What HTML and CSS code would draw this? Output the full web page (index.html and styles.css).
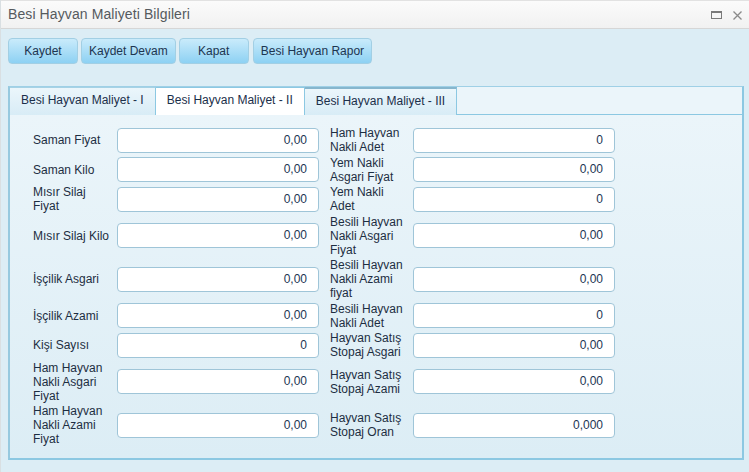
FILE: index.html
```html
<!DOCTYPE html>
<html lang="tr">
<head>
<meta charset="utf-8">
<title>Besi Hayvan Maliyeti Bilgileri</title>
<link rel="stylesheet" href="styles.css">
</head>
<body>
<div class="win">
  <div class="titlebar">
    <span class="title">Besi Hayvan Maliyeti Bilgileri</span>
    <span class="tools">
      <svg class="ico" width="11" height="8" viewBox="0 0 11 8"><rect x="0.5" y="0.5" width="10" height="7" fill="none" stroke="#7a7a7a" stroke-width="1"/><rect x="0" y="0" width="11" height="2" fill="#7a7a7a"/></svg>
      <svg class="ico" width="9" height="9" viewBox="0 0 9 9"><path d="M0.5 0.5 L8.5 8.5 M8.5 0.5 L0.5 8.5" stroke="#8a8a8a" stroke-width="1.3" fill="none"/></svg>
    </span>
  </div>
  <div class="body">
    <div class="toolbar">
      <button class="btn">Kaydet</button>
      <button class="btn">Kaydet Devam</button>
      <button class="btn">Kapat</button>
      <button class="btn">Besi Hayvan Rapor</button>
    </div>
    <div class="tabpanel">
      <div class="tabs">
        <div class="tab">Besi Hayvan Maliyet - I</div>
        <div class="tab active">Besi Hayvan Maliyet - II</div>
        <div class="tab hover">Besi Hayvan Maliyet - III</div>
      </div>
      <div class="content">
        <div class="form">
          <div class="lbl">Saman Fiyat</div><div class="inp">0,00</div>
          <div class="lbl r">Ham Hayvan Nakli Adet</div><div class="inp">0</div>

          <div class="lbl">Saman Kilo</div><div class="inp">0,00</div>
          <div class="lbl r">Yem Nakli Asgari Fiyat</div><div class="inp">0,00</div>

          <div class="lbl">Mısır Silaj Fiyat</div><div class="inp">0,00</div>
          <div class="lbl r">Yem Nakli Adet</div><div class="inp">0</div>

          <div class="lbl">Mısır Silaj Kilo</div><div class="inp">0,00</div>
          <div class="lbl r">Besili Hayvan Nakli Asgari Fiyat</div><div class="inp">0,00</div>

          <div class="lbl">İşçilik Asgari</div><div class="inp">0,00</div>
          <div class="lbl r">Besili Hayvan Nakli Azami fiyat</div><div class="inp">0,00</div>

          <div class="lbl">İşçilik Azami</div><div class="inp">0,00</div>
          <div class="lbl r">Besili Hayvan Nakli Adet</div><div class="inp">0</div>

          <div class="lbl">Kişi Sayısı</div><div class="inp">0</div>
          <div class="lbl r">Hayvan Satış Stopaj Asgari</div><div class="inp">0,00</div>

          <div class="lbl">Ham Hayvan Nakli Asgari Fiyat</div><div class="inp">0,00</div>
          <div class="lbl r">Hayvan Satış Stopaj Azami</div><div class="inp">0,00</div>

          <div class="lbl">Ham Hayvan Nakli Azami Fiyat</div><div class="inp">0,00</div>
          <div class="lbl r">Hayvan Satış Stopaj Oran</div><div class="inp">0,000</div>
        </div>
      </div>
    </div>
  </div>
</div>
</body>
</html>
```

FILE: styles.css
```css
* { box-sizing: border-box; }
html, body { margin: 0; padding: 0; }
body {
  width: 749px;
  height: 472px;
  overflow: hidden;
  font-family: "Liberation Sans", Arial, sans-serif;
  font-size: 12px;
  background: #dcedf5;
}
.win {
  height: 472px;
  border-left: 1px solid #d9dfe2;
  display: flex;
  flex-direction: column;
}
.titlebar {
  height: 29px;
  flex: none;
  border-top: 1px solid #e2e2e2;
  border-bottom: 1px solid #d6d6d6;
  background: linear-gradient(#fbfbfb, #f1f1f1);
  display: flex;
  align-items: center;
  justify-content: space-between;
  padding: 0 7px 1px 7px;
}
.title {
  font-size: 14px;
  color: #555a5e;
  letter-spacing: 0.1px;
}
.tools {
  display: flex;
  align-items: center;
  gap: 11px;
  padding-right: 0;
  margin-top: 2px;
}
.ico { display: block; }
.body {
  flex: 1;
  background: #dcedf5;
  padding: 9px 0 0 7px;
}
.toolbar {
  display: flex;
  gap: 3px;
}
.btn {
  height: 26px;
  min-width: 70px;
  padding: 0 7px;
  margin: 0;
  border: 1px solid #a2cfe4;
  border-radius: 4px;
  background: linear-gradient(#c9ebfb, #8dd1f3);
  color: #1d3550;
  font-family: "Liberation Sans", Arial, sans-serif;
  font-size: 12px;
  line-height: 24px;
}
.btn + .btn + .btn + .btn { margin-left: 1px; }
.tabpanel {
  margin-top: 22px;
  width: 736px;
  height: 374px;
  border: 2px solid #8cc8e2;
  border-top: 1px solid #9fd0e6;
  border-left: 2px solid #96c9df;
  display: flex;
  flex-direction: column;
}
.tabs {
  height: 28px;
  flex: none;
  display: flex;
  background: #ebf5fa;
  border-bottom: 1px solid #8cc8e2;
}
.tab {
  height: 28px;
  padding: 0 11px;
  line-height: 25px;
  border-right: 1px solid #8cc8e2;
  border-top: 1px solid #a6d2e5;
  background: linear-gradient(#ebf6fb, #d8ecf6);
  color: #1b2f4a;
  white-space: nowrap;
}
.tab.active {
  background: #ffffff;
  height: 28px;
  border-top: 1px solid #8cc8e2;
}
.tab.hover {
  border-top: 2px solid #86b6cd;
  line-height: 24px;
}
.content {
  flex: 1;
  background: linear-gradient(#ebf5fa, #dcedf5);
  padding: 11px 0 0 23px;
}
.form {
  display: grid;
  grid-template-columns: 84px 202px 94px 202px;
  row-gap: 1.5px;
  align-items: center;
}
.lbl {
  padding-right: 6px;
  line-height: 14px;
  color: #1d2e42;
}
.lbl.r { padding-left: 11px; }
.inp {
  height: 25px;
  width: 202px;
  background: #ffffff;
  border: 1px solid #9fc5d8;
  border-radius: 4px;
  text-align: right;
  padding-right: 11px;
  line-height: 23px;
  color: #1c3553;
}
```
